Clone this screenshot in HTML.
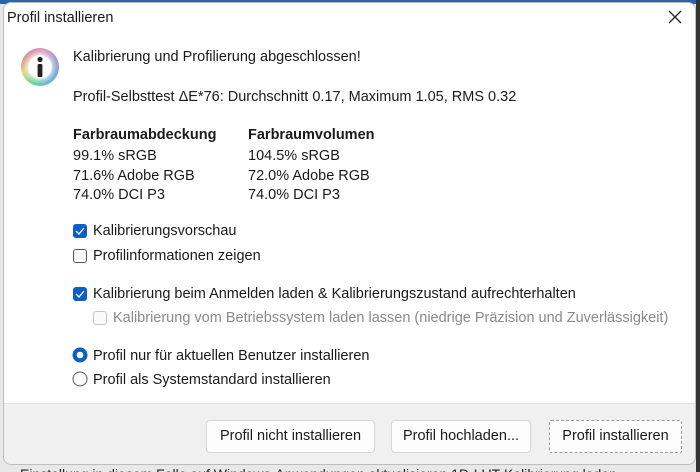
<!DOCTYPE html>
<html><head><meta charset="utf-8"><style>
*{margin:0;padding:0;box-sizing:border-box}
html,body{width:700px;height:472px;overflow:hidden}
body{background:#e8e8e8;font-family:"Liberation Sans",sans-serif;font-size:14.5px;color:#1a1a1a;position:relative}
.strip{position:absolute;left:0;top:0;width:700px;height:4px;background:#2a62b0}
.rs{position:absolute;right:0;top:0;width:4px;height:472px;background:#333}
.bg{position:absolute;left:20px;top:466px;font-size:14px;color:#222;white-space:nowrap}
.dlg{position:absolute;left:3px;top:2px;width:693px;height:463px;background:#fff;border-radius:8px;overflow:hidden;border:1px solid #bdbdbd}
.t{position:absolute;white-space:nowrap}
.footer{position:absolute;left:0;top:400px;width:100%;height:63px;background:#f0f0f0;border-top:1px solid #e3e3e3}
.btn{position:absolute;top:16px;height:33px;background:#fdfdfd;border:1px solid #d6d6d6;border-radius:4px;text-align:center;line-height:31px;font-size:14.5px;white-space:nowrap}
.cb{position:absolute;width:14px;height:14px;border-radius:3px}
.on{background:#0a5fc4}
.off{border:1px solid #555;background:#fff}
.dis{border:1px solid #c6c6c6;background:#fafafa}
.cb.on svg{position:absolute;left:2px;top:3px}
.b{font-weight:bold}
</style></head><body>
<div class="strip"></div><div class="rs"></div>
<div class="bg">Einstellung in diesem Falle auf Windows-Anwendungen aktualisieren 1D-LUT-Kalibrierung laden</div>
<div class="dlg">
<div class="t" style="left:3px;top:7px;font-size:14.5px">Profil installieren</div>
<svg style="position:absolute;left:664px;top:7px" width="14" height="14"><path d="M1 1L13 13M13 1L1 13" stroke="#222" stroke-width="1.3"/></svg>
<svg style="position:absolute;left:16px;top:44px" width="40" height="40" viewBox="0 0 40 40">
<defs><radialGradient id="w" cx="50%" cy="50%" r="50%"><stop offset="0.45" stop-color="#fff"/><stop offset="1" stop-color="#fff" stop-opacity="0"/></radialGradient>
<linearGradient id="c1" x1="0" y1="0" x2="1" y2="1"><stop offset="0" stop-color="#f55"/><stop offset="0.35" stop-color="#fd6"/><stop offset="0.6" stop-color="#6d8"/><stop offset="1" stop-color="#59f"/></linearGradient>
<linearGradient id="c2" x1="1" y1="0" x2="0" y2="1"><stop offset="0" stop-color="#d6f" stop-opacity=".8"/><stop offset="1" stop-color="#6cf" stop-opacity="0"/></linearGradient></defs>
<circle cx="20" cy="20" r="19" fill="url(#c1)"/><circle cx="20" cy="20" r="19" fill="url(#c2)"/>
<circle cx="20" cy="20" r="17" fill="url(#w)"/><circle cx="20" cy="20" r="12" fill="#fff" opacity=".85"/>
<circle cx="20" cy="12.5" r="2.6" fill="#222"/><rect x="17.6" y="17" width="4.8" height="13" rx="1" fill="#222"/></svg>
<div class="t" style="left:69px;top:46px">Kalibrierung und Profilierung abgeschlossen!</div>
<div class="t" style="left:69px;top:86px">Profil-Selbsttest ΔE*76: Durchschnitt 0.17, Maximum 1.05, RMS 0.32</div>
<div class="t b" style="left:69px;top:124px">Farbraumabdeckung</div>
<div class="t b" style="left:244px;top:124px">Farbraumvolumen</div>
<div class="t" style="left:69px;top:144px;line-height:19.5px">99.1% sRGB<br>71.6% Adobe RGB<br>74.0% DCI P3</div>
<div class="t" style="left:244px;top:144px;line-height:19.5px">104.5% sRGB<br>72.0% Adobe RGB<br>74.0% DCI P3</div>
<div class="cb on" style="left:69px;top:221px"><svg width="10" height="8"><path d="M1 4L4 7L9 1" stroke="#fff" stroke-width="1.3" fill="none"/></svg></div>
<div class="t" style="left:89px;top:220px">Kalibrierungsvorschau</div>
<div class="cb off" style="left:69px;top:246px"></div>
<div class="t" style="left:89px;top:245px">Profilinformationen zeigen</div>
<div class="cb on" style="left:69px;top:284px"><svg width="10" height="8"><path d="M1 4L4 7L9 1" stroke="#fff" stroke-width="1.3" fill="none"/></svg></div>
<div class="t" style="left:89px;top:283px">Kalibrierung beim Anmelden laden &amp; Kalibrierungszustand aufrechterhalten</div>
<div class="cb dis" style="left:89px;top:308px"></div>
<div class="t" style="left:109px;top:307px;color:#8a8a8a">Kalibrierung vom Betriebssystem laden lassen (niedrige Präzision und Zuverlässigkeit)</div>
<svg style="position:absolute;left:68px;top:344px" width="16" height="16"><circle cx="8" cy="8" r="7.5" fill="#0a5fc4"/><circle cx="8" cy="8" r="3.3" fill="#fff"/></svg>
<div class="t" style="left:89px;top:345px">Profil nur für aktuellen Benutzer installieren</div>
<svg style="position:absolute;left:68px;top:368px" width="16" height="16"><circle cx="8" cy="8" r="7" fill="#fff" stroke="#555" stroke-width="1"/></svg>
<div class="t" style="left:89px;top:369px">Profil als Systemstandard installieren</div>
<div class="footer">
<div class="btn" style="left:202px;width:169px">Profil nicht installieren</div>
<div class="btn" style="left:387px;width:140px">Profil hochladen...</div>
<div class="btn" style="left:545px;width:133px;border:1px dashed #9a9a9a;border-radius:2px">Profil installieren</div>
</div>
</div>
</body></html>
